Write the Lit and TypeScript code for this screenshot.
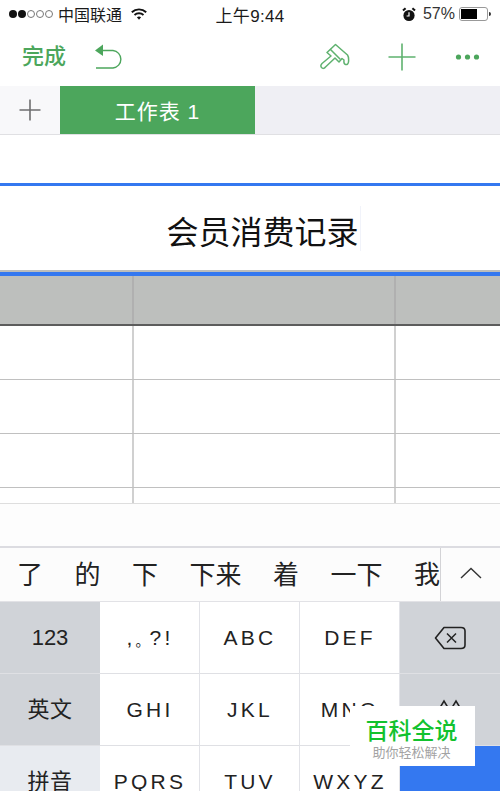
import { LitElement, html, css, svg } from "lit";
import { customElement } from "lit/decorators.js";

@customElement("app-root")
export class AppRoot extends LitElement {
  static styles = css`
    :host {
      display: block;
      width: 500px;
      height: 791px;
      overflow: hidden;
      position: relative;
      background: #fff;
      font-family: "Liberation Sans", "Noto Sans CJK SC", sans-serif;
      color: #1a1a1a;
    }
    .status {
      height: 28px;
      display: grid;
      grid-template-columns: 1fr auto 1fr;
      align-items: center;
      padding: 0 9px 0 9px;
    }
    .st-left { display: flex; align-items: center; font-size: 16px; }
    .dots { display: flex; gap: 1px; margin-right: 5px; }
    .dot { width: 8px; height: 8px; border-radius: 50%; background: #111; box-sizing: border-box; }
    .dot.off { background: #fff; border: 1px solid #777; }
    .wifi { margin-left: 9px; }
    .st-right { display: flex; justify-content: flex-end; align-items: center; font-size: 16px; color: #333; }
    .time { font-size: 17px; letter-spacing: 0.3px; }
    .st-right .pct { margin: 0 4px 0 7px; }
    .toolbar {
      height: 57px;
      display: flex;
      align-items: center;
      padding: 0 20px 1px 22px;
    }
    .done { font-size: 22px; font-weight: 500; color: #4ca65c; width: 72px; padding-bottom: 6px; }
    .spacer { flex: 1; }
    .sp-a { width: 38px; }
    .sp-b { width: 39px; }
    .tabs {
      height: 49px;
      box-sizing: border-box;
      display: flex;
      background: #efeff4;
      border-bottom: 1px solid #e0e0e3;
    }
    .tab-add { width: 60px; background: #f8f8fa; display: flex; align-items: center; justify-content: center; }
    .tab {
      width: 195px;
      background: #4ca65c;
      color: #fff;
      font-size: 21px;
      display: flex;
      align-items: center;
      justify-content: center;
      letter-spacing: 1px;
      padding-bottom: 1px;
      box-sizing: border-box;
    }
    .gap { height: 48px; }
    .blue1 { height: 3px; background: #3478f0; }
    .title {
      height: 84px;
      display: flex;
      align-items: center;
      justify-content: center;
      font-size: 32px;
      color: #111;
      padding-left: 27px;
      box-sizing: border-box;
    }
    .title span:first-child { padding-top: 3px; }
    .caret { width: 1px; height: 45px; background: #f1f3fa; margin-left: 1px; }
    .grid { border-top: 2px solid #bcbdbc; }
    .blue2 { height: 4px; background: #3478f0; }
    .row {
      display: grid;
      grid-template-columns: 132px 2px 260px 2px 1fr;
      border-bottom: 1px solid #c0c0c0;
    }
    .row i { background: #d0d0d0; }
    .row.head { height: 48px; background: #bdbfbd; border-bottom: 2px solid #5c5c5c; }
    .row.head i { background: #b0b0b0; }
    .row.body { height: 53px; }
    .row.last { height: 15px; border-bottom: 1px solid #dedede; }
    .pane {
      height: 42px;
      background: #fdfdfd;
      border-bottom: 2px solid #dcdce1;
    }
    .cands {
      height: 54px;
      background: #fcfcfc;
      display: flex;
      border-bottom: 1px solid #e2e2e6;
      box-sizing: border-box;
    }
    .cand-list {
      flex: 1;
      display: flex;
      justify-content: space-between;
      align-items: center;
      font-size: 26px;
      padding: 0 0 4px 17px;
      color: #222;
    }
    .chev {
      width: 60px;
      box-sizing: border-box;
      border-left: 1px solid #d3d3d6;
      display: flex;
      align-items: center;
      justify-content: center;
      padding-bottom: 3px;
    }
    .keys {
      display: grid;
      grid-template-columns: repeat(5, 100px);
      grid-auto-rows: 72px;
    }
    .key {
      display: flex;
      align-items: center;
      justify-content: center;
      background: #fff;
      border-right: 1px solid #e2e3e8;
      border-bottom: 1px solid #dfe0e4;
      box-sizing: border-box;
      font-size: 21px;
      letter-spacing: 3.2px;
      color: #222;
      padding-left: 1px;
    }
    .key.fn { background: #d0d3d8; letter-spacing: 0; border-right: none; padding-left: 0; }
    .key.light { background: #e8ebf0; letter-spacing: 0; border-right: none; padding-left: 0; }
    .key.num { letter-spacing: 0; font-size: 22px; }
    .key.blue { background: #3478f0; border: none; }
    .key.cjk { font-size: 22px; letter-spacing: 0.5px; padding-bottom: 5px; }
    .ideo { font-size: 14px; letter-spacing: 0; padding-top: 5px; }
    .wm {
      position: absolute;
      left: 350px;
      top: 706px;
      width: 125px;
      height: 60px;
      box-sizing: border-box;
      padding-right: 2px;
      background: #fff;
      display: flex;
      flex-direction: column;
      align-items: center;
    }
    .wm b { font-size: 23px; font-weight: 500; color: #12c22e; line-height: 27px; margin-top: 12px; white-space: nowrap; }
    .wm span { font-size: 13px; color: #a3a3a3; line-height: 16px; white-space: nowrap; }
  `;

  private ic(w: number, h: number, body: unknown) {
    return html`<svg width=${w} height=${h} viewBox="0 0 ${w} ${h}" style="display:block">${body}</svg>`;
  }

  render() {
    const row = (cls: string) => html`<div class="row ${cls}"><span></span><i></i><span></span><i></i><span></span></div>`;
    return html`
      <div class="status">
        <div class="st-left">
          <div class="dots">
            <div class="dot"></div><div class="dot"></div><div class="dot off"></div><div class="dot off"></div><div class="dot off"></div>
          </div>
          <span>中国联通</span>
          <span class="wifi">${this.ic(16, 12, svg`
            <path d="M0.8 4.2 A10.6 10.6 0 0 1 15.2 4.2" fill="none" stroke="#111" stroke-width="1.9"/>
            <path d="M3.5 7 A6.7 6.7 0 0 1 12.5 7" fill="none" stroke="#111" stroke-width="1.9"/>
            <path d="M5.9 9.3 A3.2 3.2 0 0 1 10.1 9.3 L8 11.7 Z" fill="#111"/>`)}</span>
        </div>
        <div class="time">上午9:44</div>
        <div class="st-right">
          ${this.ic(14, 15, svg`
            <circle cx="7" cy="8.5" r="5.6" fill="#111"/>
            <path d="M1 3.6 L3.6 1.2 M13 3.6 L10.4 1.2" stroke="#111" stroke-width="2"/>
            <path d="M7 5.2 V9 H4.6" stroke="#fff" stroke-width="1.2" fill="none"/>`)}
          <span class="pct">57%</span>
          ${this.ic(32, 14, svg`
            <rect x="0.5" y="0.5" width="28" height="13" rx="2.5" fill="#fff" stroke="#999"/>
            <rect x="2" y="2" width="16" height="10" fill="#000"/>
            <path d="M30 5 a2 2 0 0 1 0 4 z" fill="#333"/>`)}
        </div>
      </div>

      <div class="toolbar">
        <div class="done">完成</div>
        ${this.ic(30, 28, svg`
          <path d="M3 7.5 H19 A8.8 8.8 0 0 1 19 25 H2" fill="none" stroke="#4ca65c" stroke-width="1.4"/>
          <path d="M1 7.5 L9 1.5 V13 Z" fill="#4ca65c"/>`)}
        <div class="spacer"></div>
        ${this.ic(30, 28, svg`
          <g fill="none" stroke="#5fb26f" stroke-width="1.5" stroke-linejoin="round" stroke-linecap="round">
            <path d="M15.5 1.5 L27.5 12 Q29 14 28.5 19 Q28 22 25.5 21.5 Q23.5 21 24 17 L22 15.5 L19 19 L15 15 L5.5 24 Q3.5 26.5 1.5 24.5 Q0 22.5 2 20.5 L11 13 L7 9.5 Z"/>
            <path d="M10.5 6.5 L20 16"/>
          </g>`)}
        <span class="sp-a"></span>
        ${this.ic(28, 28, svg`<path d="M14 0.5 V27.5 M0.5 14 H27.5" stroke="#5fb26f" stroke-width="1.6"/>`)}
        <span class="sp-b"></span>
        ${this.ic(25, 8, svg`<circle cx="3.5" cy="4" r="2.6" fill="#4ca65c"/><circle cx="12.5" cy="4" r="2.6" fill="#4ca65c"/><circle cx="21.5" cy="4" r="2.6" fill="#4ca65c"/>`)}
      </div>

      <div class="tabs">
        <div class="tab-add">${this.ic(22, 22, svg`<path d="M11 0.5 V21.5 M0.5 11 H21.5" stroke="#6e6e70" stroke-width="1.6"/>`)}</div>
        <div class="tab">工作表 1</div>
      </div>
      <div class="gap"></div>
      <div class="blue1"></div>
      <div class="title"><span>会员消费记录</span><span class="caret"></span></div>
      <div class="grid">
        <div class="blue2"></div>
        ${row("head")}
        ${row("body")}${row("body")}${row("body")}${row("last")}
      </div>
      <div class="pane"></div>
      <div class="cands">
        <div class="cand-list">
          <span>了</span><span>的</span><span>下</span><span>下来</span><span>着</span><span>一下</span><span>我</span>
        </div>
        <div class="chev">${this.ic(22, 12, svg`<path d="M1 11 L11 1.5 L21 11" fill="none" stroke="#333" stroke-width="1.4"/>`)}</div>
      </div>
      <div class="keys">
        <div class="key fn num">123</div>
        <div class="key"><span>,</span><span class="ideo">。</span><span>?!</span></div>
        <div class="key">ABC</div>
        <div class="key">DEF</div>
        <div class="key fn">${this.ic(32, 24, svg`
          <path d="M10 1.5 H27 Q31 1.5 31 5 V19 Q31 22.5 27 22.5 H10 L1.5 12 Z" fill="none" stroke="#222" stroke-width="1.6" stroke-linejoin="round"/>
          <path d="M13 7.5 L22 16.5 M22 7.5 L13 16.5" stroke="#222" stroke-width="1.5"/>`)}</div>
        <div class="key fn cjk">英文</div>
        <div class="key">GHI</div>
        <div class="key">JKL</div>
        <div class="key">MNO</div>
        <div class="key fn">${this.ic(26, 24, svg`
          <path d="M1 13 L7 3 L13 13 M13 13 L19 3 L25 13" fill="none" stroke="#222" stroke-width="1.5"/>`)}</div>
        <div class="key light cjk">拼音</div>
        <div class="key">PQRS</div>
        <div class="key">TUV</div>
        <div class="key">WXYZ</div>
        <div class="key blue"></div>
      </div>
      <div class="wm"><b>百科全说</b><span>助你轻松解决</span></div>
    `;
  }
}
